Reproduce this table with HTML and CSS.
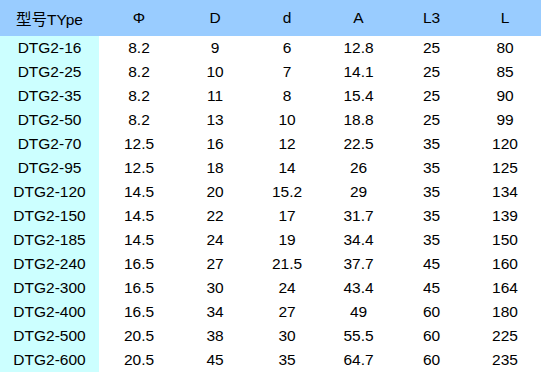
FILE: index.html
```html
<!DOCTYPE html>
<html>
<head>
<meta charset="utf-8">
<link rel="stylesheet" href="styles.css">
</head>
<body>
<table class="spec">
<colgroup>
<col class="c1"><col class="c2"><col class="c3"><col class="c4"><col class="c5"><col class="c6"><col class="c7">
</colgroup>
<thead>
<tr><th>型号TYpe</th><th>Φ</th><th>D</th><th>d</th><th>A</th><th>L3</th><th>L</th></tr>
</thead>
<tbody>
<tr><td class="type">DTG2-16</td><td>8.2</td><td>9</td><td>6</td><td>12.8</td><td>25</td><td>80</td></tr>
<tr><td class="type">DTG2-25</td><td>8.2</td><td>10</td><td>7</td><td>14.1</td><td>25</td><td>85</td></tr>
<tr><td class="type">DTG2-35</td><td>8.2</td><td>11</td><td>8</td><td>15.4</td><td>25</td><td>90</td></tr>
<tr><td class="type">DTG2-50</td><td>8.2</td><td>13</td><td>10</td><td>18.8</td><td>25</td><td>99</td></tr>
<tr><td class="type">DTG2-70</td><td>12.5</td><td>16</td><td>12</td><td>22.5</td><td>35</td><td>120</td></tr>
<tr><td class="type">DTG2-95</td><td>12.5</td><td>18</td><td>14</td><td>26</td><td>35</td><td>125</td></tr>
<tr><td class="type">DTG2-120</td><td>14.5</td><td>20</td><td>15.2</td><td>29</td><td>35</td><td>134</td></tr>
<tr><td class="type">DTG2-150</td><td>14.5</td><td>22</td><td>17</td><td>31.7</td><td>35</td><td>139</td></tr>
<tr><td class="type">DTG2-185</td><td>14.5</td><td>24</td><td>19</td><td>34.4</td><td>35</td><td>150</td></tr>
<tr><td class="type">DTG2-240</td><td>16.5</td><td>27</td><td>21.5</td><td>37.7</td><td>45</td><td>160</td></tr>
<tr><td class="type">DTG2-300</td><td>16.5</td><td>30</td><td>24</td><td>43.4</td><td>45</td><td>164</td></tr>
<tr><td class="type">DTG2-400</td><td>16.5</td><td>34</td><td>27</td><td>49</td><td>60</td><td>180</td></tr>
<tr><td class="type">DTG2-500</td><td>20.5</td><td>38</td><td>30</td><td>55.5</td><td>60</td><td>225</td></tr>
<tr><td class="type">DTG2-600</td><td>20.5</td><td>45</td><td>35</td><td>64.7</td><td>60</td><td>235</td></tr>
</tbody>
</table>
</body>
</html>
```
FILE: styles.css
```css
html, body {
  margin: 0;
  padding: 0;
  background: #fff;
}
.spec {
  border-collapse: collapse;
  table-layout: fixed;
  width: 541px;
  font-family: "Liberation Sans", Arial, "Noto Sans CJK SC", sans-serif;
  font-size: 15.5px;
  color: #000;
}
.c1 { width: 99px; }
.c2 { width: 80px; }
.c3 { width: 72px; }
.c4 { width: 72px; }
.c5 { width: 71px; }
.c6 { width: 75px; }
.c7 { width: 72px; }
.spec th {
  background: #99ccff;
  height: 36px;
  padding: 0;
  font-weight: normal;
  text-align: center;
  vertical-align: middle;
}
.spec td {
  height: 24px;
  padding: 0;
  text-align: center;
  vertical-align: middle;
}
.spec td.type {
  background: #ccffff;
}
```
